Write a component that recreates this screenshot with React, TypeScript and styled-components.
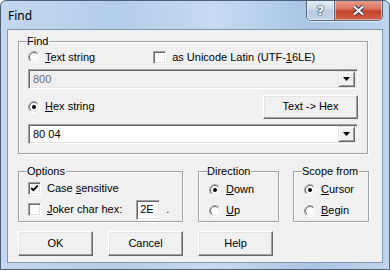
import React from 'react'
import styled, { createGlobalStyle } from 'styled-components'

const GlobalStyle = createGlobalStyle`
  html, body {
    margin: 0;
    padding: 0;
    background: #ffffff;
  }
  body {
    font-family: 'Liberation Sans', Arial, sans-serif;
    font-size: 11px;
    color: #000;
  }
`

const Window = styled.div`
  position: relative;
  width: 390px;
  height: 270px;
  box-sizing: border-box;
  border: 1px solid #4d6178;
  border-radius: 6px 6px 0 0;
  background: linear-gradient(90deg, #c3d8ef 0%, #b4cde8 30%, #c6dbf1 55%, #a9c5e4 80%, #bed5ee 100%);
  display: flex;
  flex-direction: column;
  overflow: hidden;
`

const TitleBar = styled.div`
  height: 28px;
  display: flex;
  align-items: flex-start;
  justify-content: space-between;
  padding-left: 7px;
`

const Title = styled.div`
  font-family: 'Noto Sans', 'Open Sans', sans-serif;
  font-size: 12px;
  line-height: 12px;
  margin-top: 9px;
  color: #000;
`

const CaptionButtons = styled.div`
  display: flex;
  margin-top: -1px;
  margin-right: 6px;
  height: 20px;
  border: 1px solid #56687d;
  border-top: none;
  border-radius: 0 0 5px 5px;
  overflow: hidden;
  box-shadow: 0 1px 0 rgba(255, 255, 255, 0.6);
`

const CaptionButton = styled.div<{ close?: boolean }>`
  width: ${(p) => (p.close ? '47px' : '27px')};
  height: 100%;
  display: flex;
  align-items: center;
  justify-content: center;
  box-shadow: inset 0 0 0 1px rgba(255, 255, 255, 0.45);
  background: ${(p) =>
    p.close
      ? 'linear-gradient(180deg, #e8a08f 0%, #d9745f 45%, #c4422a 55%, #d2614a 100%)'
      : 'linear-gradient(180deg, #e6edf5 0%, #cfdceb 45%, #b8c9dd 55%, #c5d5e8 100%)'};
  border-left: ${(p) => (p.close ? '1px solid #56687d' : 'none')};
  color: #fff;
  font-family: 'DejaVu Sans', sans-serif;
  font-weight: bold;
  font-size: 13px;
  text-shadow: 0 0 1px #2b3a4c, 0 0 1px #2b3a4c, 0 0 2px #2b3a4c;
`

const Client = styled.div`
  margin: 0 6px 0 6px;
  height: 234px;
  box-sizing: border-box;
  border: 1px solid #8197b2;
  background: #f0f0f0;
  padding: 11px 10px 0 10px;
  display: flex;
  flex-direction: column;
`

const Group = styled.div<{ w: number; h: number }>`
  position: relative;
  width: ${(p) => p.w}px;
  height: ${(p) => p.h}px;
  box-sizing: border-box;
  border: 1px solid #a0a0a0;
  box-shadow: inset 1px 1px #fff, 1px 1px #fff;
`

const Legend = styled.span`
  position: absolute;
  top: -8px;
  left: 8px;
  padding: 0 1px 0 0;
  background: #f0f0f0;
  line-height: 14px;
`

const FindBody = styled.div`
  display: flex;
  flex-direction: column;
  padding: 8px 9px 0 9px;
`

const Row = styled.div<{ h: number; mt?: number }>`
  display: flex;
  align-items: center;
  height: ${(p) => p.h}px;
  margin-top: ${(p) => p.mt ?? 0}px;
`

const Label = styled.span<{ gap?: number }>`
  margin-left: ${(p) => p.gap ?? 5}px;
  white-space: nowrap;
  line-height: 13px;
`

const U = styled.span`
  text-decoration: underline;
  text-underline-offset: 1px;
`

const Spacer = styled.div`
  flex: 1;
`

const Combo = styled.div<{ disabled?: boolean }>`
  margin-top: ${(p) => (p.disabled ? 5 : 6)}px;
  height: 20px;
  box-sizing: border-box;
  border: 1px solid;
  border-color: #a0a0a0 #fff #fff #a0a0a0;
  box-shadow: inset 1px 1px #696969, inset -1px -1px #e3e3e3;
  background: ${(p) => (p.disabled ? '#f0f0f0' : '#fff')};
  color: ${(p) => (p.disabled ? '#6d6d6d' : '#000')};
  display: flex;
  align-items: center;
  padding: 2px 2px 2px 4px;
`

const ComboText = styled.span`
  flex: 1;
  line-height: 13px;
`

const DropButton = styled.div`
  width: 17px;
  height: 16px;
  box-sizing: border-box;
  border: 1px solid;
  border-color: #e3e3e3 #696969 #696969 #e3e3e3;
  box-shadow: inset 1px 1px #fff, inset -1px -1px #a0a0a0;
  background: #f0f0f0;
  display: flex;
  align-items: center;
  justify-content: center;
`

const Button = styled.div<{ w: number; h?: number }>`
  width: ${(p) => p.w}px;
  height: ${(p) => p.h ?? 25}px;
  box-sizing: border-box;
  border: 1px solid;
  border-color: #fff #696969 #696969 #fff;
  box-shadow: inset -1px -1px #a0a0a0, inset 1px 1px #e3e3e3;
  background: #f0f0f0;
  display: flex;
  align-items: center;
  justify-content: center;
  line-height: 13px;
`

const CheckBox = styled.div`
  width: 13px;
  height: 13px;
  box-sizing: border-box;
  border: 1px solid;
  border-color: #a0a0a0 #fff #fff #a0a0a0;
  box-shadow: inset 1px 1px #696969, inset -1px -1px #e3e3e3;
  background: #fff;
  display: flex;
  align-items: center;
  justify-content: center;
  flex-shrink: 0;
`

const HexInput = styled.div`
  width: 24px;
  height: 20px;
  box-sizing: border-box;
  border: 1px solid;
  border-color: #a0a0a0 #fff #fff #a0a0a0;
  box-shadow: inset 1px 1px #696969, inset -1px -1px #e3e3e3;
  background: #fff;
  padding: 2px 0 0 3px;
  line-height: 13px;
  margin-left: 14px;
`

const LowerRow = styled.div`
  display: flex;
  margin-top: 17px;
`

const GroupBody = styled.div<{ pl: number; pt: number; gap: number }>`
  display: flex;
  flex-direction: column;
  padding: ${(p) => p.pt}px 0 0 ${(p) => p.pl}px;
  gap: ${(p) => p.gap}px;
`

const ButtonRow = styled.div`
  display: flex;
  margin-top: 9px;
`

const Radio: React.FC<{ checked?: boolean }> = ({ checked }) => (
  <svg width="12" height="12" viewBox="0 0 12 12" style={{ flexShrink: 0 }}>
    <circle cx="6" cy="6" r="5.5" fill="#fff" stroke="#fff" />
    <path d="M2.1 9.9 A5.5 5.5 0 0 1 9.9 2.1" fill="none" stroke="#a0a0a0" />
    <circle cx="6" cy="6" r="4.5" fill="#fff" stroke="#e3e3e3" />
    <path d="M2.8 9.2 A4.5 4.5 0 0 1 9.2 2.8" fill="none" stroke="#696969" />
    {checked && <circle cx="6" cy="6" r="2" fill="#000" />}
  </svg>
)

const Check: React.FC<{ checked?: boolean }> = ({ checked }) => (
  <CheckBox>
    {checked && (
      <svg width="9" height="9" viewBox="0 0 9 9">
        <polyline points="1.2,4 3.3,6.2 7.8,1.6" fill="none" stroke="#000" strokeWidth="1.9" />
      </svg>
    )}
  </CheckBox>
)

const Arrow = () => (
  <svg width="7" height="4" viewBox="0 0 7 4">
    <polygon points="0,0 7,0 3.5,4" fill="#000" />
  </svg>
)

const App: React.FC = () => {
  return (
    <>
      <GlobalStyle />
      <Window>
        <TitleBar>
          <Title>Find</Title>
          <CaptionButtons>
            <CaptionButton>?</CaptionButton>
            <CaptionButton close>
              <svg width="13" height="11" viewBox="0 0 13 11">
                <path d="M2 1.5 L11 9.5 M11 1.5 L2 9.5" stroke="#2b3a4c" strokeWidth="4" />
                <path d="M2 1.5 L11 9.5 M11 1.5 L2 9.5" stroke="#fff" strokeWidth="2.2" />
              </svg>
            </CaptionButton>
          </CaptionButtons>
        </TitleBar>
        <Client>
          <Group w={350} h={113}>
            <Legend>Find</Legend>
            <FindBody>
              <Row h={14}>
                <Radio />
                <Label>
                  <U>T</U>ext string
                </Label>
                <Spacer style={{ flex: 'none', width: 58 }} />
                <Check />
                <Label gap={6}>
                  as Unicode Latin (UTF-<U>1</U>6LE)
                </Label>
              </Row>
              <Combo disabled>
                <ComboText>800</ComboText>
                <DropButton>
                  <Arrow />
                </DropButton>
              </Combo>
              <Row h={23} mt={6}>
                <Radio checked />
                <Label>
                  <U>H</U>ex string
                </Label>
                <Spacer />
                <Button w={95} h={24}>
                  Text -&gt; Hex
                </Button>
              </Row>
              <Combo>
                <ComboText>80 04</ComboText>
                <DropButton>
                  <Arrow />
                </DropButton>
              </Combo>
            </FindBody>
          </Group>
          <LowerRow>
            <Group w={165} h={51}>
              <Legend>Options</Legend>
              <GroupBody pl={9} pt={10} gap={8}>
                <Row h={13}>
                  <Check checked />
                  <Label gap={6}>
                    Case <U>s</U>ensitive
                  </Label>
                </Row>
                <Row h={13}>
                  <Check />
                  <Label gap={6}>
                    <U>J</U>oker char hex:
                  </Label>
                  <HexInput>2E</HexInput>
                  <Label gap={6}>.</Label>
                </Row>
              </GroupBody>
            </Group>
            <Group w={81} h={51} style={{ marginLeft: 15 }}>
              <Legend>Direction</Legend>
              <GroupBody pl={10} pt={11} gap={8}>
                <Row h={13}>
                  <Radio checked />
                  <Label>
                    <U>D</U>own
                  </Label>
                </Row>
                <Row h={13}>
                  <Radio />
                  <Label>
                    <U>U</U>p
                  </Label>
                </Row>
              </GroupBody>
            </Group>
            <Group w={76} h={51} style={{ marginLeft: 14 }}>
              <Legend>Scope from</Legend>
              <GroupBody pl={10} pt={11} gap={8}>
                <Row h={13}>
                  <Radio checked />
                  <Label>
                    <U>C</U>ursor
                  </Label>
                </Row>
                <Row h={13}>
                  <Radio />
                  <Label>
                    <U>B</U>egin
                  </Label>
                </Row>
              </GroupBody>
            </Group>
          </LowerRow>
          <ButtonRow>
            <Button w={75}>OK</Button>
            <Button w={75} style={{ marginLeft: 15 }}>
              Cancel
            </Button>
            <Button w={75} style={{ marginLeft: 15 }}>
              Help
            </Button>
          </ButtonRow>
        </Client>
      </Window>
    </>
  )
}

export default App
